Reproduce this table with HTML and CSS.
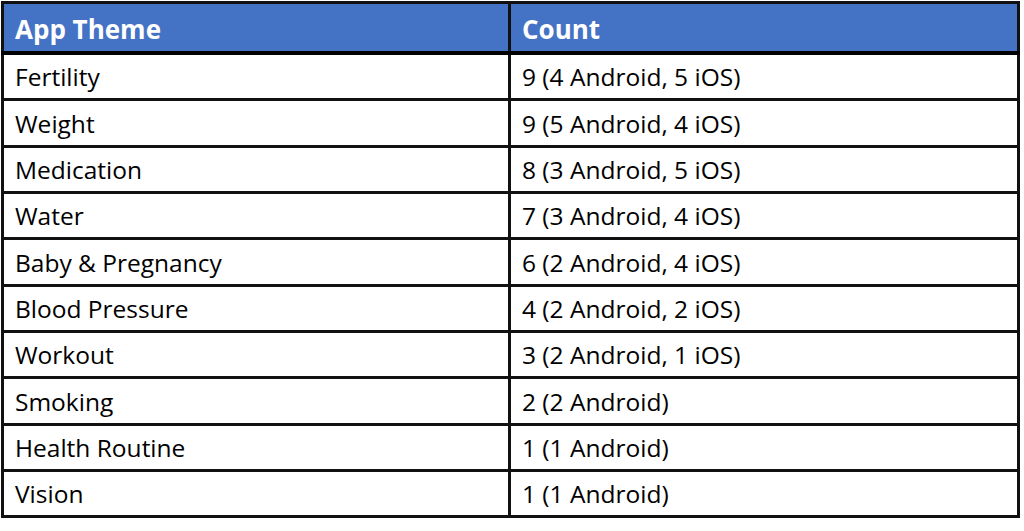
FILE: index.html
```html
<!DOCTYPE html>
<html lang="en">
<head>
    <meta charset="UTF-8">
    <title>App Themes</title>
    <link rel="stylesheet" href="styles.css">
</head>
<body>
    <table class="theme-table">
        <thead>
            <tr>
                <th class="col-theme">App Theme</th>
                <th>Count</th>
            </tr>
        </thead>
        <tbody>
            <tr><td>Fertility</td><td>9 (4 Android, 5 iOS)</td></tr>
            <tr><td>Weight</td><td>9 (5 Android, 4 iOS)</td></tr>
            <tr><td>Medication</td><td>8 (3 Android, 5 iOS)</td></tr>
            <tr><td>Water</td><td>7 (3 Android, 4 iOS)</td></tr>
            <tr><td>Baby &amp; Pregnancy</td><td>6 (2 Android, 4 iOS)</td></tr>
            <tr><td>Blood Pressure</td><td>4 (2 Android, 2 iOS)</td></tr>
            <tr><td>Workout</td><td>3 (2 Android, 1 iOS)</td></tr>
            <tr><td>Smoking</td><td>2 (2 Android)</td></tr>
            <tr><td>Health Routine</td><td>1 (1 Android)</td></tr>
            <tr><td>Vision</td><td>1 (1 Android)</td></tr>
        </tbody>
    </table>
</body>
</html>
```

FILE: styles.css
```css
html, body {
    margin: 0;
    padding: 0;
    background: #ffffff;
    font-family: 'Open Sans', 'Liberation Sans', sans-serif;
}

body {
    padding: 1px 0 0 1px;
}

.theme-table {
    width: 1019px;
    border-collapse: collapse;
    border: 3px solid #000;
    table-layout: fixed;
}

.theme-table th,
.theme-table td {
    text-align: left;
    padding: 0 0 0 11px;
    border: 3px solid #111;
    color: #000;
    font-size: 24.5px;
    height: 43.35px;
}

.theme-table .col-theme {
    width: 493px;
}

.theme-table th {
    background: #4472c4;
    color: #fff;
    font-weight: bold;
    font-size: 26px;
    height: 44px;
    padding-top: 3px;
    border-bottom: 4px solid #000;
}
```
